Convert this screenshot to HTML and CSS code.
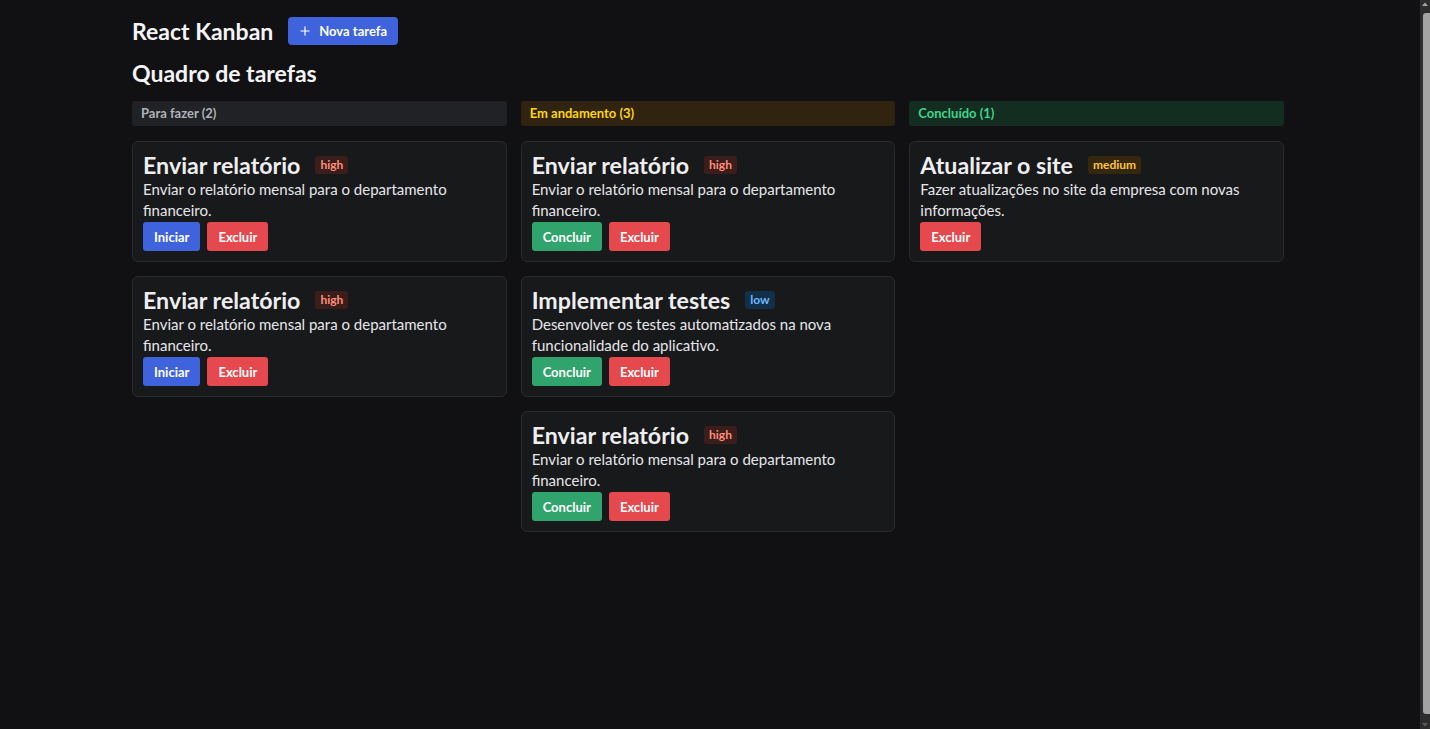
FILE: index.html
```html
<!DOCTYPE html>
<html lang="pt-BR">
<head>
<meta charset="utf-8">
<title>React Kanban</title>
<link rel="stylesheet" href="styles.css">
</head>
<body>
<div class="page">
<div class="app">
  <header class="topbar">
    <h1 class="brand">React Kanban</h1>
    <button class="btn-new">
      <svg class="plus" width="10" height="10" viewBox="0 0 10 10"><path d="M5 0.5v9M0.5 5h9" stroke="#fff" stroke-width="1.2" fill="none"/></svg>
      <span>Nova tarefa</span>
    </button>
  </header>
  <h2 class="board-title">Quadro de tarefas</h2>
  <main class="board">
    <section class="column">
      <div class="col-head todo">Para fazer (2)</div>
      <article class="card">
        <div class="card-title"><h3>Enviar relatório</h3><span class="badge high">high</span></div>
        <p class="desc">Enviar o relatório mensal para o departamento financeiro.</p>
        <div class="actions"><button class="btn blue">Iniciar</button><button class="btn red">Excluir</button></div>
      </article>
      <article class="card">
        <div class="card-title"><h3>Enviar relatório</h3><span class="badge high">high</span></div>
        <p class="desc">Enviar o relatório mensal para o departamento financeiro.</p>
        <div class="actions"><button class="btn blue">Iniciar</button><button class="btn red">Excluir</button></div>
      </article>
    </section>
    <section class="column">
      <div class="col-head doing">Em andamento (3)</div>
      <article class="card">
        <div class="card-title"><h3>Enviar relatório</h3><span class="badge high">high</span></div>
        <p class="desc">Enviar o relatório mensal para o departamento financeiro.</p>
        <div class="actions"><button class="btn green">Concluir</button><button class="btn red">Excluir</button></div>
      </article>
      <article class="card">
        <div class="card-title"><h3>Implementar testes</h3><span class="badge low">low</span></div>
        <p class="desc">Desenvolver os testes automatizados na nova funcionalidade do aplicativo.</p>
        <div class="actions"><button class="btn green">Concluir</button><button class="btn red">Excluir</button></div>
      </article>
      <article class="card">
        <div class="card-title"><h3>Enviar relatório</h3><span class="badge high">high</span></div>
        <p class="desc">Enviar o relatório mensal para o departamento financeiro.</p>
        <div class="actions"><button class="btn green">Concluir</button><button class="btn red">Excluir</button></div>
      </article>
    </section>
    <section class="column">
      <div class="col-head done">Concluído (1)</div>
      <article class="card">
        <div class="card-title"><h3>Atualizar o site</h3><span class="badge medium">medium</span></div>
        <p class="desc">Fazer atualizações no site da empresa com novas informações.</p>
        <div class="actions"><button class="btn red">Excluir</button></div>
      </article>
    </section>
  </main>
</div>
</div>
<div class="scrollbar" aria-hidden="true">
  <svg class="sb-arrow" width="10" height="8" viewBox="0 0 10 8"><path d="M2 6h6L5 2.5z" fill="#a3a3a3"/></svg>
  <div class="sb-thumb"></div>
  <svg class="sb-arrow" width="10" height="8" viewBox="0 0 10 8"><path d="M2 2h6L5 5.5z" fill="#5a5a5a"/></svg>
</div>
</body>
</html>
```
FILE: styles.css
```css
html {
  color-scheme: dark;
  background: #111113;
}
* { box-sizing: border-box; }
body {
  margin: 0;
  display: flex;
  min-height: 100vh;
  background: #111113;
  color: #eeeef0;
  font-family: Lato, "Noto Sans", sans-serif;
}
.page {
  flex: 1;
  padding-right: 4px;
}
.scrollbar {
  flex: 0 0 10px;
  height: 100vh;
  display: flex;
  flex-direction: column;
  background: #2c2c2c;
}
.sb-arrow {
  flex: 0 0 auto;
  display: block;
}
.sb-thumb {
  flex: 1;
  margin: 5px 0 7px 3px;
  background: #a3a3a3;
  border-radius: 3px 0 0 3px;
}
.app {
  max-width: 1152px;
  margin: 0 auto;
  padding: 17px 0 8px;
}
.topbar {
  display: flex;
  align-items: center;
  gap: 15px;
  height: 28px;
}
.brand {
  margin: 0;
  font-size: 23px;
  font-weight: 700;
  color: #f4f4f6;
}
.btn-new {
  display: flex;
  align-items: center;
  gap: 9px;
  height: 28px;
  padding: 0 11px 0 12px;
  border: 0;
  border-radius: 4px;
  background: #3e63dd;
  color: #fff;
  font-family: inherit;
  font-size: 13px;
  font-weight: 700;
}
.board-title {
  margin: 14px 0 14px;
  line-height: 28px;
  font-size: 23px;
  font-weight: 700;
  color: #f4f4f6;
}
.board {
  display: grid;
  grid-template-columns: repeat(3, 1fr);
  gap: 14px;
  align-items: start;
}
.column {
  display: flex;
  flex-direction: column;
  gap: 14px;
}
.col-head {
  height: 25px;
  margin-bottom: 1px;
  padding: 0 9px;
  border-radius: 3px;
  font-size: 13px;
  font-weight: 700;
  line-height: 25px;
}
.col-head.todo { background: #212225; color: #b0b4ba; }
.col-head.doing { background: #302410; color: #ffd60a; }
.col-head.done { background: #132d21; color: #3dd68c; }
.card {
  background: #18191b;
  border: 1px solid #2a2b2f;
  border-radius: 6px;
  padding: 10px;
}
.card-title {
  display: flex;
  align-items: center;
  gap: 15px;
  height: 26px;
}
.card-title h3 {
  margin: 0;
  font-size: 23.2px;
  font-weight: 700;
  color: #eeeef0;
}
.badge {
  height: 18px;
  padding: 0 5px;
  border-radius: 3px;
  font-size: 12px;
  font-weight: 700;
  line-height: 18px;
}
.badge.high { background: #3b1d1b; color: #ff8f79; }
.badge.low { background: #13304a; color: #70b8ff; }
.badge.medium { background: #35280f; color: #ffc53d; }
.desc {
  margin: 1px 0 0;
  font-size: 15px;
  line-height: 21px;
  color: #e6e6ea;
}
.actions {
  display: flex;
  gap: 7px;
  margin-top: 1px;
}
.btn {
  height: 29px;
  padding: 0 11px;
  border: 0;
  border-radius: 3px;
  color: #fff;
  font-family: inherit;
  font-size: 13px;
  font-weight: 700;
}
.btn.blue { background: #3e63dd; }
.btn.green { background: #30a46c; }
.btn.red { background: #e5484d; }
```
